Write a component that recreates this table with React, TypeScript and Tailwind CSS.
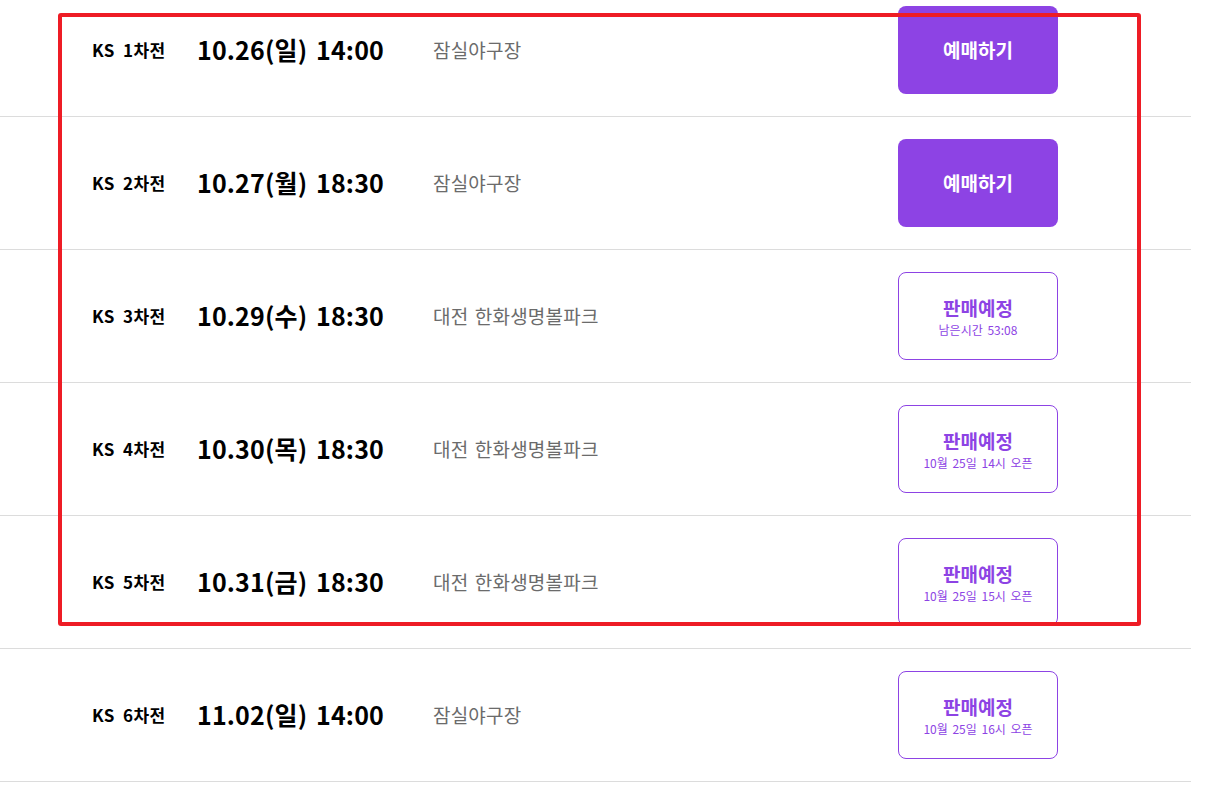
import React from "react";

type Row = {
  round: string;
  date: string;
  venue: string;
  status: "buy" | "soon";
  sub?: string;
};

const rows: Row[] = [
  { round: "KS 1차전", date: "10.26(일) 14:00", venue: "잠실야구장", status: "buy" },
  { round: "KS 2차전", date: "10.27(월) 18:30", venue: "잠실야구장", status: "buy" },
  { round: "KS 3차전", date: "10.29(수) 18:30", venue: "대전 한화생명볼파크", status: "soon", sub: "남은시간 53:08" },
  { round: "KS 4차전", date: "10.30(목) 18:30", venue: "대전 한화생명볼파크", status: "soon", sub: "10월 25일 14시 오픈" },
  { round: "KS 5차전", date: "10.31(금) 18:30", venue: "대전 한화생명볼파크", status: "soon", sub: "10월 25일 15시 오픈" },
  { round: "KS 6차전", date: "11.02(일) 14:00", venue: "잠실야구장", status: "soon", sub: "10월 25일 16시 오픈" },
];

export default function App() {
  return (
    <div
      className="relative h-[787px] w-[1220px] overflow-hidden bg-white"
      style={{ fontFamily: '"Noto Sans CJK KR", "Noto Sans", sans-serif' }}
    >
      <div className="mt-[-16px] w-[1191px]">
        {rows.map((r) => (
          <div
            key={r.round}
            className="flex h-[133px] items-center border-b border-[#dcdcdc] pl-[92px]"
          >
            <div className="w-[105px] text-[17px] font-bold tracking-[0.4px] [word-spacing:4px] text-black">
              {r.round}
            </div>
            <div className="w-[236px] text-[25px] font-bold tracking-[0.15px] [word-spacing:3px] text-black">
              {r.date}
            </div>
            <div className="w-[465px] text-[19px] tracking-[0.2px] [word-spacing:2px] text-[#6b6b6b]">
              {r.venue}
            </div>
            {r.status === "buy" ? (
              <div className="flex h-[88px] w-[160px] items-center justify-center rounded-[8px] bg-[#8d43e4] text-[19px] font-bold text-white">
                예매하기
              </div>
            ) : (
              <div className="flex h-[88px] w-[160px] flex-col items-center justify-center rounded-[8px] border border-[#8d43e4] text-[#8d43e4]">
                <div className="text-[19px] font-bold leading-[27px]">판매예정</div>
                <div className="text-[12px] leading-[17px] [word-spacing:2px]">{r.sub}</div>
              </div>
            )}
          </div>
        ))}
      </div>
      <div className="pointer-events-none absolute left-[58px] top-[13px] h-[613px] w-[1083px] rounded-[3px] border-4 border-[#ee1c25]" />
    </div>
  );
}
